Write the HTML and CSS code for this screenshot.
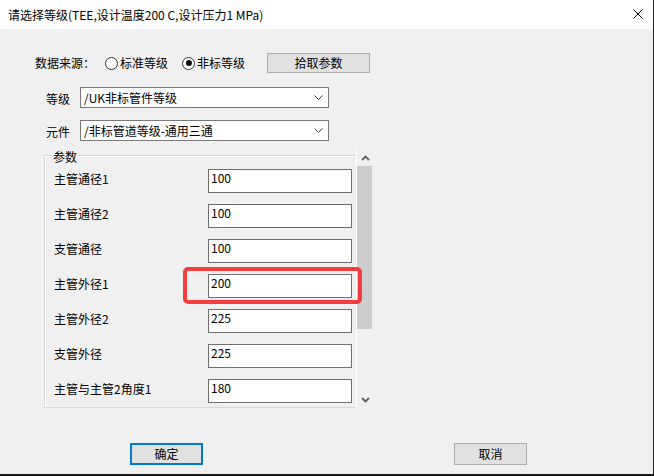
FILE: index.html
```html
<!DOCTYPE html>
<html lang="zh-CN">
<head>
<meta charset="utf-8">
<title>请选择等级</title>
<link rel="stylesheet" href="styles.css">
</head>
<body>
<div class="window">
  <div class="titlebar">
    <span class="title">请选择等级(TEE,设计温度200 C,设计压力1 MPa)</span>
    <svg class="close" width="10" height="10" viewBox="0 0 10 10"><path d="M0.5 0.5 L9.5 9.5 M9.5 0.5 L0.5 9.5" stroke="#000" stroke-width="1" fill="none"/></svg>
  </div>
  <div class="content">
    <div class="source-row">
      <span class="source-label">数据来源：</span>
      <span class="radio"><span class="radio-circle"></span><span class="radio-text">标准等级</span></span>
      <span class="radio radio-second"><span class="radio-circle checked"></span><span class="radio-text">非标等级</span></span>
      <span class="btn btn-pick">拾取参数</span>
    </div>
    <div class="field-row">
      <span class="field-label">等级</span>
      <div class="select"><span class="select-text">/UK非标管件等级</span><svg class="chev" width="9" height="5" viewBox="0 0 9 5"><path d="M0.5 0.5 L4.5 4.5 L8.5 0.5" stroke="#444" stroke-width="1" fill="none"/></svg></div>
    </div>
    <div class="field-row field-row-2">
      <span class="field-label">元件</span>
      <div class="select"><span class="select-text">/非标管道等级-通用三通</span><svg class="chev" width="9" height="5" viewBox="0 0 9 5"><path d="M0.5 0.5 L4.5 4.5 L8.5 0.5" stroke="#444" stroke-width="1" fill="none"/></svg></div>
    </div>
    <div class="panel">
      <div class="group">
        <span class="legend">参数</span>
        <div class="param-row"><span class="param-label">主管通径1</span><div class="input">100</div></div>
        <div class="param-row"><span class="param-label">主管通径2</span><div class="input">100</div></div>
        <div class="param-row"><span class="param-label">支管通径</span><div class="input">100</div></div>
        <div class="param-row"><span class="param-label">主管外径1</span><div class="input">200</div></div>
        <div class="param-row"><span class="param-label">主管外径2</span><div class="input">225</div></div>
        <div class="param-row"><span class="param-label">支管外径</span><div class="input">225</div></div>
        <div class="param-row"><span class="param-label">主管与主管2角度1</span><div class="input">180</div></div>
      </div>
      <div class="scrollbar">
        <div class="sb-btn"><svg width="9" height="6" viewBox="0 0 9 6"><path d="M1 5 L4.5 1.5 L8 5" stroke="#606060" stroke-width="1.8" fill="none"/></svg></div>
        <div class="sb-thumb"></div>
        <div class="sb-track"></div>
        <div class="sb-btn"><svg width="9" height="6" viewBox="0 0 9 6"><path d="M1 1 L4.5 4.5 L8 1" stroke="#606060" stroke-width="1.8" fill="none"/></svg></div>
      </div>
    </div>
    <div class="buttons">
      <span class="btn btn-ok">确定</span>
      <span class="btn btn-cancel">取消</span>
    </div>
  </div>
  <div class="highlight"></div>
</div>
</body>
</html>
```

FILE: styles.css
```css
* { box-sizing: border-box; }
html, body { margin: 0; padding: 0; }
body {
  font-family: "Noto Sans CJK SC", "Noto Sans", sans-serif;
  font-size: 12px;
  color: #000;
  background: #f0f0f0;
}
.window {
  position: relative;
  width: 654px;
  height: 476px;
  background: #f0f0f0;
  border-right: 1px solid #1e1e1e;
  border-bottom: 2px solid #151515;
  overflow: hidden;
}
.titlebar {
  height: 29px;
  background: #fff;
  display: flex;
  align-items: center;
  justify-content: space-between;
  padding: 0 10px 0 8px;
}
.title { font-size: 12px; line-height: 16px; }
.close { display: block; margin-top: -1px; }

.source-row {
  margin-top: 24px;
  height: 20px;
  padding-left: 35px;
  display: flex;
  align-items: center;
  line-height: 14px;
}
.source-label { width: 70px; }
.radio { display: flex; align-items: center; }
.radio-second { margin-left: 14px; }
.radio-circle {
  width: 13px; height: 13px;
  border: 1px solid #333;
  border-radius: 50%;
  background: #fff;
  display: flex; align-items: center; justify-content: center;
  margin-right: 2px;
}
.radio-circle.checked::after {
  content: "";
  width: 6px; height: 6px;
  border-radius: 50%;
  background: #111;
}
.btn {
  display: flex; align-items: center; justify-content: center;
  background: #e1e1e1;
  border: 1px solid #adadad;
  line-height: 14px;
}
.btn-pick { margin-left: 22px; width: 103px; height: 20px; }

.field-row {
  margin-top: 14px;
  padding-left: 46px;
  display: flex;
  align-items: center;
  height: 21px;
}
.field-row-2 { margin-top: 12px; }
.field-label { width: 34px; line-height: 14px; padding-top: 2px; }
.select {
  width: 249px; height: 21px;
  border: 1px solid #7a7a7a;
  background: #fff;
  display: flex; align-items: center; justify-content: space-between;
  padding: 0 5px 0 3px;
  line-height: 14px;
}
.chev { display: block; }

.panel {
  margin: 8px 0 0 44px;
  height: 260px;
  display: flex;
}
.group {
  width: 312px;
  height: 253px;
  margin-top: 6px;
  border: 1px solid #d9d9d9;
  border-right: none;
  box-shadow: inset 1px 1px 0 #fff;
  padding: 0 0 0 9px;
}
.legend {
  display: block;
  width: fit-content;
  margin: -6px 0 0 -2px;
  padding: 0 1px;
  background: #f0f0f0;
  line-height: 14px;
}
.param-row {
  display: flex;
  align-items: flex-start;
  height: 24px;
  margin-top: 11px;
}
.legend + .param-row { margin-top: 5px; }
.param-label { width: 154px; padding-top: 3px; line-height: 14px; }
.input {
  width: 144px; height: 24px;
  border: 1px solid #6f6f6f;
  background: #fff;
  padding: 1px 2px 0;
  line-height: 14px;
}
.scrollbar {
  width: 17px;
  border-left: 1px solid #fff;
  display: flex;
  flex-direction: column;
  height: 259px;
}
.sb-btn {
  height: 17px;
  display: flex; align-items: center; justify-content: center;
}
.sb-btn svg { display: block; }
.sb-thumb { height: 163px; width: 15px; background: #cdcdcd; }
.sb-track { flex: 1; }

.buttons {
  margin-top: 34px;
  padding-left: 130px;
  display: flex;
  gap: 251px;
}
.btn-ok, .btn-cancel { width: 73px; height: 22px; }
.btn-ok { border: 2px solid #0078d7; }

.highlight {
  position: absolute;
  left: 183px; top: 267px;
  width: 179px; height: 37px;
  border: 4px solid #f43c3c;
  border-radius: 5px;
}
```
